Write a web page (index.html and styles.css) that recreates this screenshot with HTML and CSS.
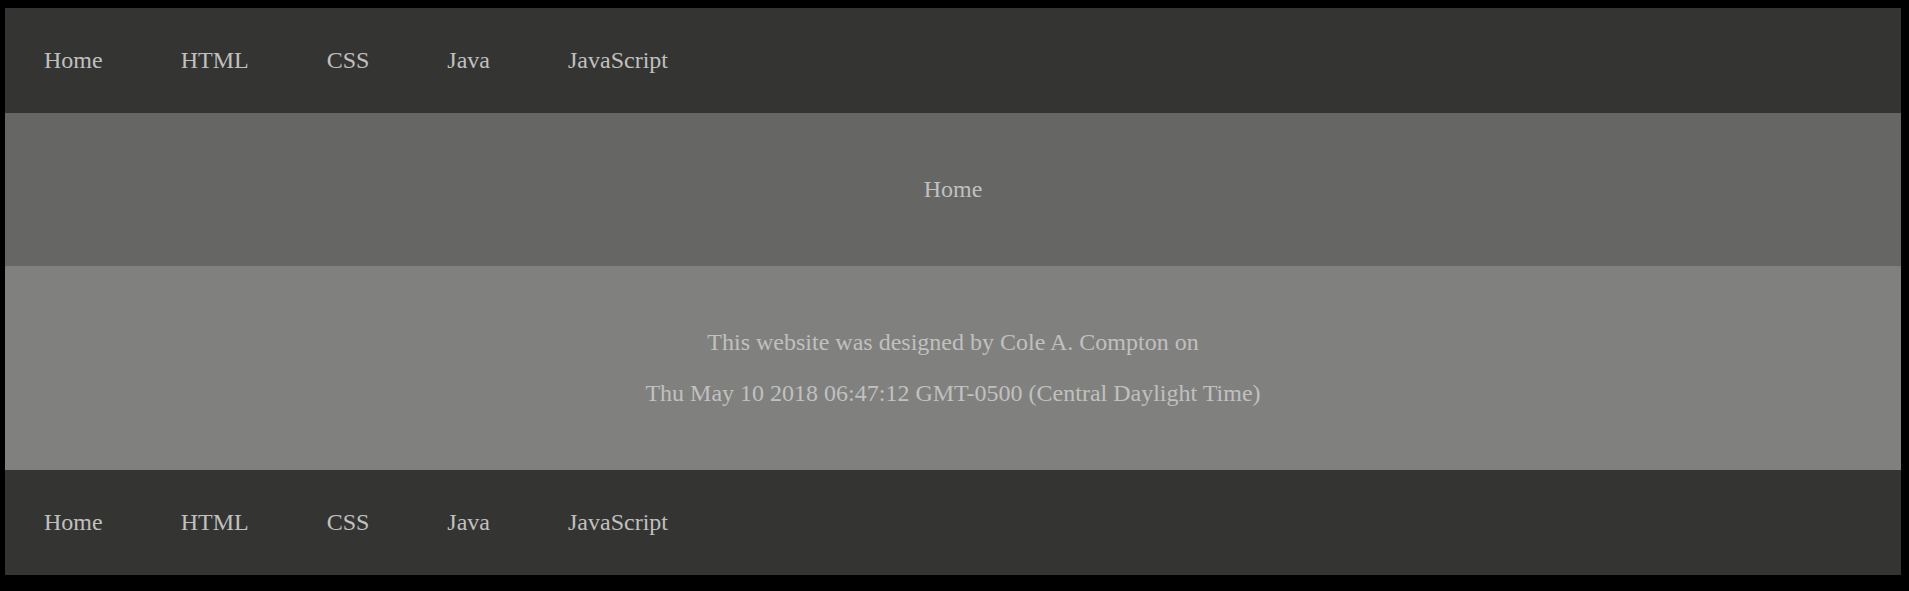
FILE: index.html
```html
<!DOCTYPE html>
<html lang="en">
<head>
<meta charset="utf-8">
<title>Home</title>
<link rel="stylesheet" href="styles.css">
</head>
<body>
<div class="page">
  <nav class="nav">
    <a class="nav-link" href="#">Home</a>
    <a class="nav-link" href="#">HTML</a>
    <a class="nav-link" href="#">CSS</a>
    <a class="nav-link" href="#">Java</a>
    <a class="nav-link" href="#">JavaScript</a>
  </nav>
  <header class="header">
    <div class="header-title">Home</div>
  </header>
  <main class="content">
    <p class="line">This website was designed by Cole A. Compton on</p>
    <p class="line">Thu May 10 2018 06:47:12 GMT-0500 (Central Daylight Time)</p>
  </main>
  <nav class="nav">
    <a class="nav-link" href="#">Home</a>
    <a class="nav-link" href="#">HTML</a>
    <a class="nav-link" href="#">CSS</a>
    <a class="nav-link" href="#">Java</a>
    <a class="nav-link" href="#">JavaScript</a>
  </nav>
</div>
</body>
</html>
```

FILE: styles.css
```css
html, body {
  background: #000;
}
body {
  margin: 0;
  padding: 8px 8px 16px 5px;
  font-family: "Liberation Serif", "Times New Roman", serif;
  font-size: 24px;
  color: #c0c0c0;
}
.page {
  width: 1896px;
  display: flex;
  flex-direction: column;
}
.nav {
  height: 105px;
  background: #343432;
  display: flex;
  align-items: center;
}
.nav-link {
  padding: 0 39px;
  color: #c0c0c0;
  text-decoration: none;
}
.header {
  height: 153px;
  background: #666664;
  display: flex;
  align-items: center;
  justify-content: center;
}
.content {
  height: 204px;
  background: #80807e;
  display: flex;
  flex-direction: column;
  align-items: center;
  justify-content: center;
}
.line {
  margin: 0;
}
.line + .line {
  margin-top: 24px;
}
```
